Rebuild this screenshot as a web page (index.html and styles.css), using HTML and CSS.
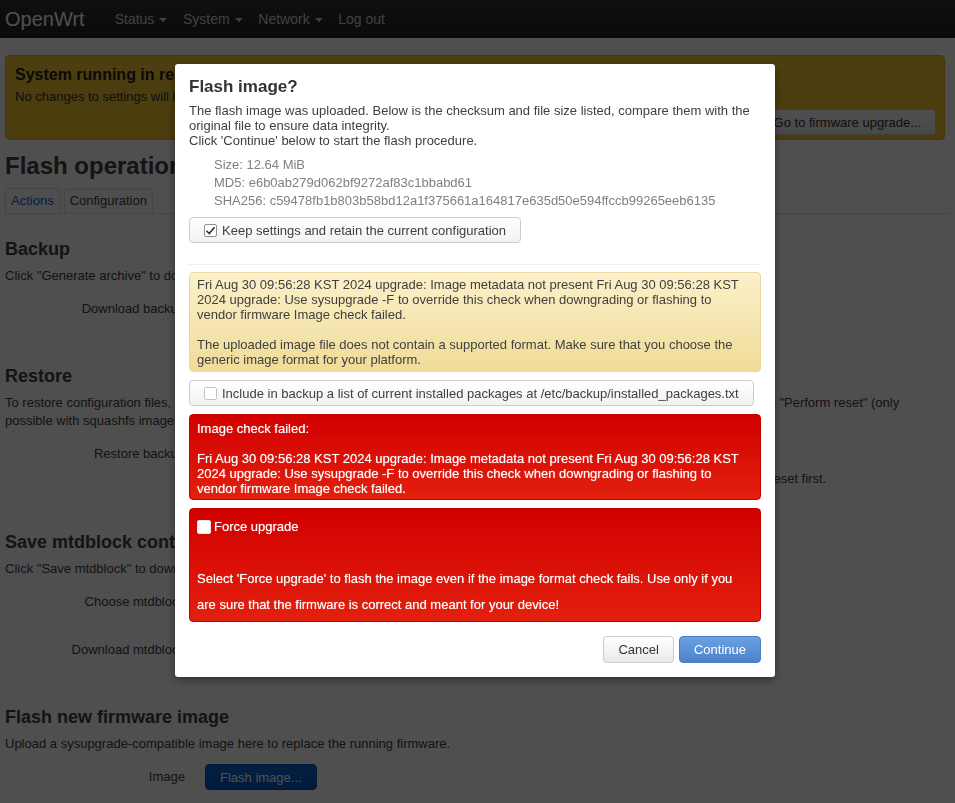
FILE: index.html
```html
<!DOCTYPE html>
<html lang="en">
<head>
    <meta charset="UTF-8">
    <meta name="viewport" content="width=device-width, initial-scale=1.0">
    <title>OpenWrt - Backup / Flash Firmware</title>
    <link rel="stylesheet" href="styles.css">
</head>
<body>
    <header class="navbar">
        <a class="brand" href="#">OpenWrt</a>
        <nav class="nav">
            <a href="#">Status<span class="caret"></span></a>
            <a href="#">System<span class="caret"></span></a>
            <a href="#">Network<span class="caret"></span></a>
            <a href="#">Log out</a>
        </nav>
    </header>

    <div class="main">
        <div class="alert-warning">
            <h4>System running in recovery (initramfs) mode.</h4>
            <p>No changes to settings will be stored and are lost after rebooting. This mode should only be used to install a firmware upgrade</p>
            <div class="right"><button class="btn">Go to firmware upgrade...</button></div>
        </div>

        <h2>Flash operations</h2>
        <ul class="tabs">
            <li class="active"><a href="#">Actions</a></li>
            <li><a href="#">Configuration</a></li>
        </ul>

        <div class="section first">
            <h3>Backup</h3>
            <p class="desc">Click "Generate archive" to download a tar archive of the current configuration files.</p>
            <div class="cbi-value">
                <label>Download backup</label>
                <button class="btn">Generate archive</button>
            </div>
        </div>

        <div class="section">
            <h3>Restore</h3>
            <p class="desc">To restore configuration files, you can upload a previously generated backup archive here. To reset the firmware to its initial state, click "Perform reset" (only possible with squashfs images).</p>
            <div class="cbi-value">
                <label>Restore backup</label>
                <button class="btn">Upload archive...</button>
            </div>
            <div class="cbi-value-description">Custom files (certificates, scripts) may remain on the system. To prevent this, perform a factory-reset first.</div>
        </div>

        <div class="section">
            <h3>Save mtdblock contents</h3>
            <p class="desc">Click "Save mtdblock" to download specified mtdblock file. (NOTE: THIS FEATURE IS FOR PROFESSIONALS! )</p>
            <div class="cbi-value">
                <label>Choose mtdblock</label>
                <button class="btn">u-boot</button>
            </div>
            <div class="cbi-value">
                <label>Download mtdblock</label>
                <button class="btn">Save mtdblock</button>
            </div>
        </div>

        <div class="section">
            <h3>Flash new firmware image</h3>
            <p class="desc">Upload a sysupgrade-compatible image here to replace the running firmware.</p>
            <div class="cbi-value">
                <label>Image</label>
                <button class="btn btn-primary">Flash image...</button>
            </div>
        </div>
    </div>

    <div class="modal-overlay">
        <div class="modal">
            <h4>Flash image?</h4>
            <p>The flash image was uploaded. Below is the checksum and file size listed, compare them with the original file to ensure data integrity.<br>Click 'Continue' below to start the flash procedure.</p>
            <ul class="checksums">
                <li>Size: 12.64 MiB</li>
                <li>MD5: e6b0ab279d062bf9272af83c1bbabd61</li>
                <li>SHA256: c59478fb1b803b58bd12a1f375661a164817e635d50e594ffccb99265eeb6135</li>
            </ul>
            <label class="btn check-btn">
                <span class="cb checked"><svg width="11" height="11" viewBox="0 0 11 11"><path d="M1.5 5.8 L4.2 8.5 L9.5 2.2" fill="none" stroke="#333" stroke-width="1.6"/></svg></span>
                Keep settings and retain the current configuration
            </label>
            <hr>
            <div class="alert-info">Fri Aug 30 09:56:28 KST 2024 upgrade: Image metadata not present Fri Aug 30 09:56:28 KST 2024 upgrade: Use sysupgrade -F to override this check when downgrading or flashing to vendor firmware Image check failed.<br><br>The uploaded image file does not contain a supported format. Make sure that you choose the generic image format for your platform.</div>
            <label class="btn check-btn">
                <span class="cb"></span>
                Include in backup a list of current installed packages at /etc/backup/installed_packages.txt
            </label>
            <div class="alert-danger">Image check failed:<br><br>Fri Aug 30 09:56:28 KST 2024 upgrade: Image metadata not present Fri Aug 30 09:56:28 KST 2024 upgrade: Use sysupgrade -F to override this check when downgrading or flashing to vendor firmware Image check failed.</div>
            <div class="alert-danger force">
                <label class="force-line"><span class="cb-force"></span>Force upgrade</label>
                <p>Select 'Force upgrade' to flash the image even if the image format check fails. Use only if you are sure that the firmware is correct and meant for your device!</p>
            </div>
            <div class="modal-footer">
                <button class="btn">Cancel</button>
                <button class="btn btn-continue">Continue</button>
            </div>
        </div>
    </div>
</body>
</html>
```

FILE: styles.css
```css
html, body {
    overflow: hidden;
}

body {
    margin: 0;
    font-family: "Liberation Sans", Arial, sans-serif;
    font-size: 13px;
    line-height: 18px;
    color: #404040;
    background-color: #fff;
}

.navbar {
    height: 38px;
    display: flex;
    align-items: center;
    padding: 0 5px;
    background: linear-gradient(#333, #222);
}

.brand {
    font-size: 20px;
    color: #fff;
    text-decoration: none;
    margin-right: 23px;
}

.nav a {
    font-size: 14px;
    color: #d0d0d0;
    text-decoration: none;
    padding: 0 5px 0 7px;
}

.caret {
    display: inline-block;
    width: 0;
    height: 0;
    margin-left: 5px;
    vertical-align: middle;
    border-top: 4px solid #d0d0d0;
    border-left: 4px solid transparent;
    border-right: 4px solid transparent;
}

.main {
    padding: 17px 5px 0;
}

.btn {
    display: inline-flex;
    align-items: center;
    box-sizing: border-box;
    height: 26px;
    padding: 0 14px;
    font-family: inherit;
    font-size: 13px;
    color: #333;
    background: linear-gradient(#fff, #e9e9e9);
    border: 1px solid #ccc;
    border-radius: 4px;
    cursor: pointer;
}

.btn-primary {
    color: #fff;
    background: linear-gradient(#0b64d6, #0858c6);
    border-color: #0750b8;
}

/* recovery mode banner */
.alert-warning {
    margin-right: 5px;
    padding: 9px 8px 4px 9px;
    background: linear-gradient(#f5c936, #f1c02a);
    border: 1px solid #e2b020;
    border-radius: 4px;
}

.alert-warning h4 {
    margin: 0;
    font-size: 16px;
    line-height: 20px;
    color: #222;
}

.alert-warning p {
    margin: 3px 0 3px;
    color: #333;
}

.right {
    text-align: right;
}

h2 {
    margin: 12px 0 8px;
    font-size: 24px;
    line-height: 28px;
}

.tabs {
    display: flex;
    margin: 0;
    padding: 0;
    list-style: none;
    border-bottom: 1px solid #ddd;
}

.tabs li {
    margin-right: 4px;
}

.tabs a {
    display: block;
    height: 24px;
    line-height: 24px;
    padding: 0 5px;
    color: #404040;
    text-decoration: none;
    background-color: #fff;
    border: 1px solid #ddd;
    border-bottom: none;
    border-radius: 4px 4px 0 0;
}

.tabs li:not(.active) a {
    background-color: #fbfbfb;
}

.tabs .active a {
    color: #0d62c9;
}

.section {
    margin-top: 42px;
}

.section.first {
    margin-top: 23px;
}

.section h3 {
    margin: 0 0 6px;
    font-size: 18px;
    line-height: 24px;
}

.desc {
    margin: 0 0 11px;
    padding-right: 40px;
}

.cbi-value {
    display: flex;
    align-items: center;
}

.cbi-value + .cbi-value {
    margin-top: 22px;
}

.cbi-value label {
    width: 180px;
    padding-right: 20px;
    text-align: right;
}

.cbi-value-description {
    margin: 3px 0 0 216px;
}

/* modal */
.modal-overlay {
    position: fixed;
    top: 0;
    left: 0;
    right: 0;
    bottom: 0;
    background-color: rgba(0, 0, 0, 0.69);
}

.modal {
    position: absolute;
    top: 64px;
    left: 175px;
    width: 600px;
    box-sizing: border-box;
    padding: 13px 14px 14px;
    background-color: #fff;
    border-radius: 3px;
    box-shadow: 0 3px 8px rgba(0, 0, 0, 0.4);
    line-height: 15px;
}

.modal h4 {
    margin: 0 0 6px;
    font-size: 17px;
    line-height: 20px;
    color: #333;
}

.modal p {
    margin: 0;
}

.checksums {
    margin: 8px 0 7px;
    padding-left: 25px;
    list-style: none;
    line-height: 18px;
    color: #808080;
}

.check-btn {
    padding-left: 14px;
    background: linear-gradient(#fff, #f2f2f2);
    color: #404040;
}

.cb {
    display: inline-flex;
    align-items: center;
    justify-content: center;
    box-sizing: border-box;
    width: 13px;
    height: 13px;
    margin-right: 5px;
    background-color: #fff;
    border: 1px solid #c4c4c4;
    border-radius: 2px;
}

.cb.checked {
    border-color: #8f8f8f;
}

hr {
    margin: 21px 0 7px;
    border: none;
    border-top: 1px solid #eee;
}

.alert-info {
    padding: 4px 7px;
    color: #404040;
    background: linear-gradient(#fbf0c9, #f0dc98);
    border: 1px solid #e8d8a4;
    border-radius: 4px;
    margin-bottom: 8px;
}

.alert-danger {
    margin-top: 8px;
    padding: 6px 7px 3px;
    color: #fff;
    text-shadow: 0 0 1px rgba(255, 255, 255, 0.6);
    background: linear-gradient(#d10000, #e3200e);
    border: 1px solid #c40000;
    border-radius: 4px;
}

.alert-danger.force {
    padding: 5px 7px 3px;
    line-height: 26px;
}

.force-line {
    display: flex;
    align-items: center;
}

.cb-force {
    display: inline-block;
    box-sizing: border-box;
    width: 14px;
    height: 14px;
    margin-right: 3px;
    background-color: #fff;
    border: 1px solid #e5e5e5;
    border-radius: 2px;
}

.alert-danger.force p {
    margin-top: 26px;
}

.modal-footer {
    display: flex;
    justify-content: flex-end;
    gap: 5px;
    margin-top: 14px;
}

.modal-footer .btn {
    height: 27px;
}

.btn-continue {
    color: #fff;
    background: linear-gradient(#6aa1e2, #4c82c9);
    border-color: #4a7fc3;
}
```
